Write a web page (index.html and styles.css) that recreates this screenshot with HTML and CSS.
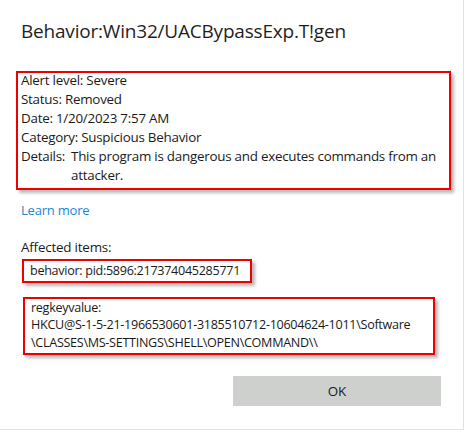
FILE: index.html
```html
<!DOCTYPE html>
<html>
<head>
<meta charset="utf-8">
<link rel="stylesheet" href="styles.css">
</head>
<body>
<div class="dialog">
  <h1 class="title">Behavior:Win32/UACBypassExp.T!gen</h1>
  <div class="box info">
    <div class="row">Alert level: Severe</div>
    <div class="row">Status: Removed</div>
    <div class="row">Date: 1/20/2023 7:57 AM</div>
    <div class="row">Category: Suspicious Behavior</div>
    <div class="row details"><span class="label">Details:</span><span class="value">This program is dangerous and executes commands from an attacker.</span></div>
  </div>
  <a class="link" href="#">Learn more</a>
  <div class="affected">Affected items:</div>
  <div class="box item small">behavior: pid:5896:217374045285771</div>
  <div class="box item reg">regkeyvalue:<br>HKCU@S-1-5-21-1966530601-3185510712-10604624-1011\Software<br>\CLASSES\MS-SETTINGS\SHELL\OPEN\COMMAND\\</div>
  <div class="actions"><button class="ok">OK</button></div>
</div>
</body>
</html>
```
FILE: styles.css
```css
html, body {
  margin: 0;
  padding: 0;
  background: #ffffff;
}
body {
  width: 466px;
  height: 431px;
  overflow: hidden;
  font-family: "Open Sans", "Noto Sans", sans-serif;
  color: #1a1a1a;
}
.dialog {
  box-sizing: border-box;
  width: 464px;
  height: 430px;
  border-right: 1px solid #e3e3e3;
  border-bottom: 1px solid #e3e3e3;
  padding: 18px 0 0 0;
}
.title {
  margin: 0 0 0 21px;
  font-weight: 400;
  font-size: 19px;
  line-height: 26px;
  color: #1f1f1f;
  letter-spacing: -0.2px;
}
.box {
  border: 2px solid #ee0000;
  box-shadow: 3px 3px 3px rgba(0,0,0,0.28);
}
.info {
  margin: 27px 0 0 16px;
  width: 428px;
  padding: 0 0 3px 3px;
  font-size: 13.4px;
  line-height: 19px;
  letter-spacing: -0.25px;
}
.row:first-child {
  margin-top: -2px;
}
.details {
  display: flex;
}
.details .label {
  flex: none;
  width: 50px;
}
.link {
  display: block;
  margin: 11px 0 0 21px;
  color: #1a86d8;
  text-decoration: none;
  font-size: 13px;
  line-height: 18px;
  letter-spacing: -0.2px;
}
.affected {
  margin: 19px 0 0 21px;
  font-size: 13.4px;
  line-height: 18px;
  letter-spacing: -0.2px;
}
.item {
  font-size: 12.6px;
  line-height: 17.5px;
  letter-spacing: -0.3px;
}
.small {
  margin: 3px 0 0 22px;
  width: 220px;
  padding: 1px 0 1px 6px;
}
.reg {
  margin: 14px 0 0 23px;
  width: 402px;
  padding: 0 0 2px 6px;
}
.actions {
  display: flex;
  justify-content: flex-end;
  margin: 21px 22px 0 0;
}
.ok {
  width: 208px;
  height: 30px;
  border: none;
  background: #cdd0cd;
  font-family: inherit;
  font-size: 13.4px;
  color: #1a1a1a;
}
```
